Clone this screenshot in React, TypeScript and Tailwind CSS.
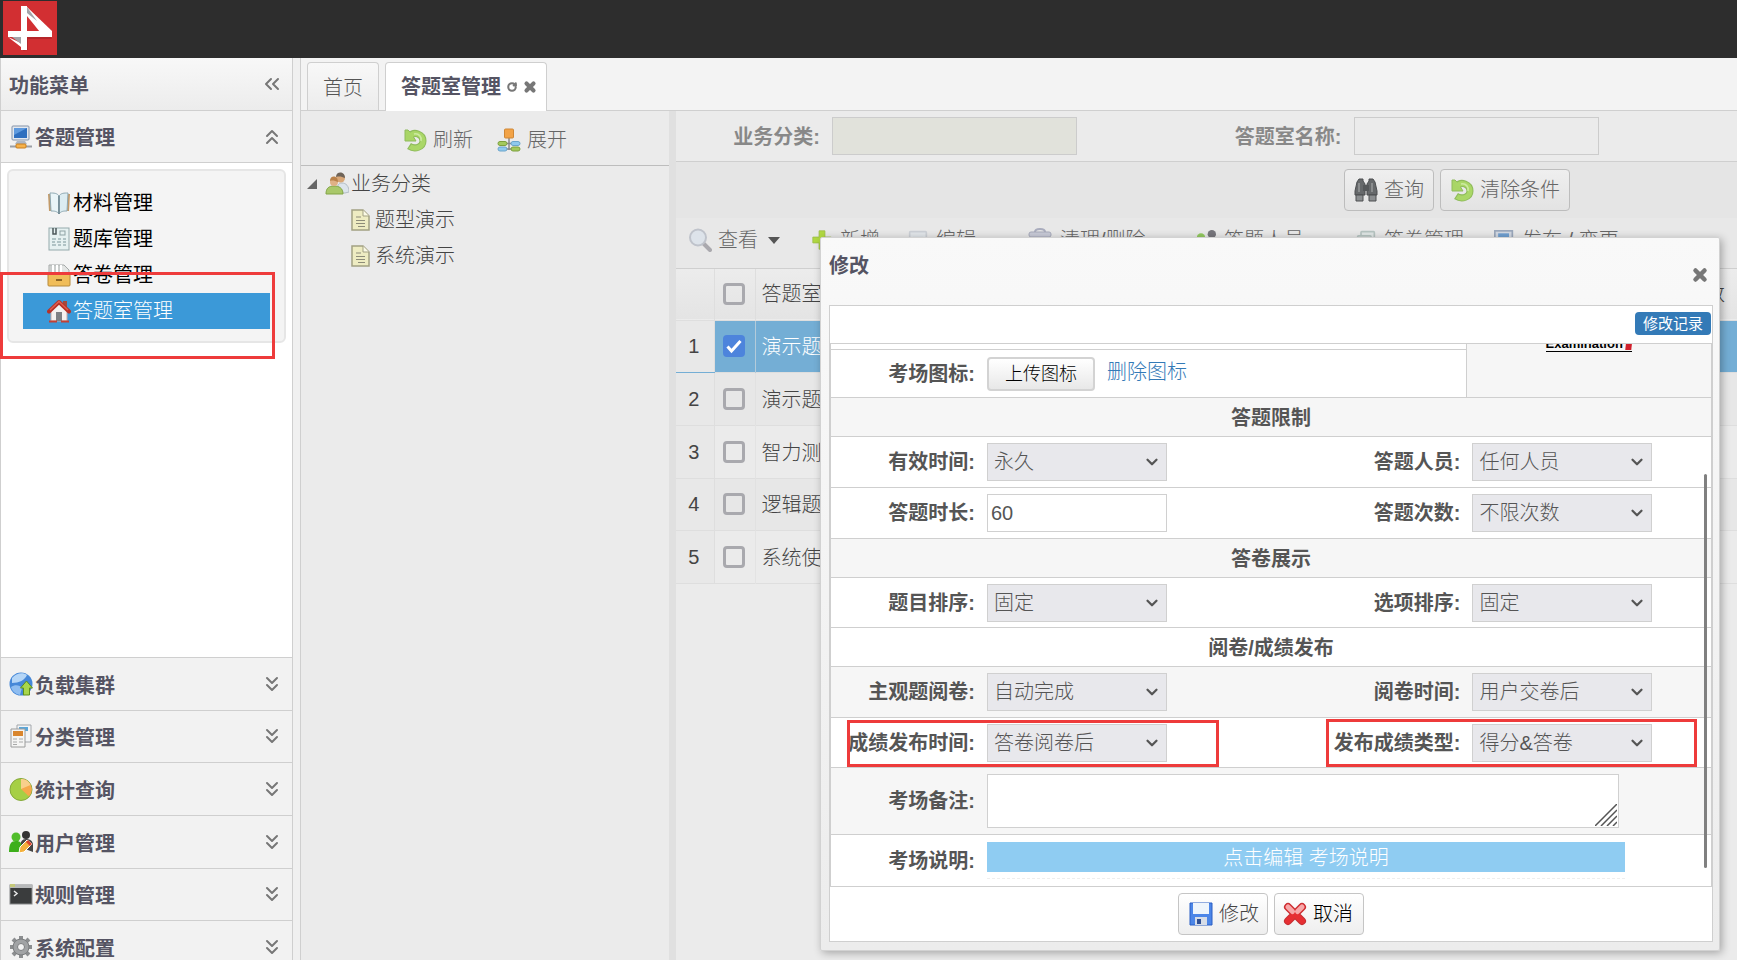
import { useState, type ReactNode } from 'react';
import { ChevronsDown, ChevronsLeft, ChevronsUp, ChevronDown, X, RotateCw } from 'lucide-react';

function Svg({ children, className = 'size-6' }: { children: ReactNode; className?: string }) {
    return <svg viewBox="0 0 24 24" fill="none" aria-hidden="true" className={`shrink-0 ${className}`}>{children}</svg>;
}

const LogoIcon = () => (
    <svg viewBox="0 0 54 54" aria-hidden="true" className="size-[54px]">
        <path fill="#d22f32" d="M0 0h54v54H0z" />
        <path fill="#b5262a" d="m20 50 5-1V38h24l-1-2H24z" />
        <path fill="#fff" d="m24 6 25 24v6h-8L24 15z" />
        <path fill="#a3a3a8" d="M24 6 34 20l-10-8z" />
        <path fill="#fff" d="m5 36 13 10v-4z" />
        <path fill="#a3a3a8" d="m9 36 9 7v-7z" />
        <path fill="#fff" d="M5 30h44v6H5z" />
        <path fill="#fff" d="M18 5h6v44h-6z" />
    </svg>
);

const ComputerIcon = () => (
    <Svg>
        <rect x="3" y="1" width="17" height="14" rx="1" fill="#e3e8ef" stroke="#8593a8" />
        <rect x="5" y="3" width="13" height="10" fill="#2f6fbf" />
        <path d="M5 3h13l-13 7z" fill="#5f9ade" />
        <path d="M8 16h8l2 3H6z" fill="#aeb7c4" />
        <path d="M1 21.500h22" stroke="#9b9fa5" strokeWidth="2" />
        <rect x="7" y="19" width="10" height="4" rx="1" fill="#f6b24b" stroke="#c97f1e" />
    </Svg>
);

const BookIcon = () => (
    <Svg>
        <path d="M1 3h5v17H2z" fill="#c39a68" />
        <path d="M18 3h5l-1 17h-4z" fill="#c39a68" />
        <path d="M3 2c4 0 7 0 9 3v18c-2-3-5-3-8-3z" fill="#eaf5f8" stroke="#8fa9b3" />
        <path d="M21 2c-4 0-7 0-9 3v18c2-3 5-3 8-3z" fill="#dcecf1" stroke="#8fa9b3" />
        <path d="M12 5v18" stroke="#6d858f" strokeWidth="1.500" />
    </Svg>
);

const SheetIcon = () => (
    <Svg>
        <rect x="2" y="1" width="20" height="22" fill="#e6f1f1" stroke="#94a9ab" />
        <path d="M6 1v6h3V1" stroke="#4c5759" strokeWidth="1.500" />
        <rect x="13" y="4" width="5" height="4" stroke="#8fa3a5" />
        <path d="M5 12h4m2 0h3m2 0h3M5 15h3m2 0h4m2 0h3M5 18h4m2 0h3m2 0h3" stroke="#9fb4b6" strokeWidth="1.500" />
    </Svg>
);

const BoxIcon = () => (
    <Svg>
        <path d="M2 2h15l5 5v6H2z" fill="#e3e5e4" stroke="#a5a9a8" />
        <path d="M6 2v10M10 2v10M14 2v10" stroke="#fff" strokeWidth="2" />
        <path d="M8 2v10M12 2v10M4 2v10" stroke="#b2b6b5" />
        <rect x="1" y="11" width="22" height="12" rx="1" fill="#f0bd59" stroke="#b68a3c" />
        <path d="M9 17h6" stroke="#8d6625" strokeWidth="2" />
    </Svg>
);

const HomeIcon = () => (
    <Svg>
        <path d="M4 12 12 5l8 7v10H4z" fill="#f5f2f0" stroke="#c9a9a3" />
        <path d="M16 2h4v6h-4z" fill="#a5493c" />
        <path d="M2 12.500 12 3l10 9.500" stroke="#b73128" strokeWidth="4" strokeLinejoin="round" strokeLinecap="round" />
        <path d="m3 11 9-8.500L21 11" stroke="#e0604f" strokeWidth="1.500" />
        <rect x="9" y="13" width="6" height="9" fill="#7f8184" />
        <path d="M2 22.500h8M14 22.500h8" stroke="#c24034" strokeWidth="2" />
    </Svg>
);

const GlobeIcon = () => (
    <Svg>
        <circle cx="12" cy="12" r="11.500" fill="#4688d8" />
        <path d="M3 6c4-5 11-6 15-3-2 5-8 8-15 8z" fill="#b5d6f7" />
        <path d="M2 15c4-3 9-2 11 1l-2 7C6 22 3 19 2 15z" fill="#8fbdf0" />
        <path d="m17.500 9 6 7h-3v7h-6v-7h-3z" fill="#a8d64b" stroke="#5f8f1d" />
    </Svg>
);

const NewsIcon = () => (
    <Svg>
        <path d="M8 1h14v17H8z" fill="#f3f5f7" stroke="#a3a7ab" />
        <path d="M10 3h9v4h-9z" fill="#5ba6d8" />
        <path d="M2 5h14v18H2z" fill="#f5f5f4" stroke="#9b9c9c" />
        <path d="M4 7h10v5H4z" fill="#d9862e" />
        <path d="M4 15h4m2 0h4M4 18h4m2 0h4M4 20.500h4" stroke="#a9aaaa" />
    </Svg>
);

const PieIcon = () => (
    <Svg>
        <circle cx="12" cy="12.500" r="11" fill="#a6cf45" stroke="#84a83a" />
        <path d="M12 12V2a10.500 10.500 0 0 1 8 17.500z" fill="#f6a84b" />
        <path d="M12 12V2c4 0 8 2 9.500 6z" fill="#f9cf8c" />
    </Svg>
);

const UsersEditIcon = () => (
    <Svg>
        <circle cx="17" cy="5" r="4" fill="#333" />
        <path d="M11 17c0-5 2-8 6-8s7 2 7 6v7z" fill="#444" />
        <circle cx="7" cy="7" r="4.500" fill="#51bd2b" />
        <path d="M0 22c0-8 2-11 7-11s6 2 6 11z" fill="#3daf1b" />
        <path d="m10 23 1-6 7-7 5 4-8 8z" fill="#f4b13d" stroke="#fff" />
        <path d="m18 11 4 4" stroke="#d9442f" strokeWidth="3" />
    </Svg>
);

const ConsoleIcon = () => (
    <Svg>
        <rect x="1" y="3" width="22" height="19" fill="#3a3c3d" stroke="#86888a" />
        <path d="M1 3h22v3H1z" fill="#b7b9ba" />
        <path d="M1 2h5v3H1z" fill="#c5c97a" />
        <path d="m5 9 3 2.500L5 14" stroke="#e8e8e8" strokeWidth="1.500" />
    </Svg>
);

const GearIcon = () => (
    <Svg>
        <path d="M12 1v22M1 12h22M4 4l16 16M20 4 4 20" stroke="#8c8e90" strokeWidth="4" />
        <circle cx="12" cy="12" r="8" fill="#a1a3a5" stroke="#7b7d7f" />
        <circle cx="12" cy="12" r="3.500" fill="#f2f2f2" stroke="#7b7d7f" />
    </Svg>
);

const UndoIcon = () => (
    <Svg>
        <path d="M7 8C11 3 20 6 20 13c0 6-8 9-14 5" stroke="#8fbb5c" strokeWidth="7" />
        <path d="M2 2h3l3 3 5 8H2z" fill="#a9d566" stroke="#8fbb5c" strokeLinejoin="round" />
        <path d="M7 8C11 3 20 6 20 13c0 6-8 9-13 5.500" stroke="#aad767" strokeWidth="5" />
        <path d="M11 6c5-1 8 3 7 7" stroke="#cdeba1" strokeWidth="1.500" />
    </Svg>
);

const TreeIcon = () => (
    <Svg>
        <path d="M12 9v13M5 15.500h14M5 21h14" stroke="#86888a" strokeWidth="1.500" />
        <rect x="7.500" y="1" width="9" height="9" rx="1" fill="#f2a347" stroke="#cf8736" />
        <rect x="1" y="13.500" width="9" height="4" rx="2" fill="#a3c95d" stroke="#7da03e" />
        <rect x="14" y="13.500" width="9" height="4" rx="2" fill="#8fc9ee" stroke="#6ba5cb" />
        <rect x="1" y="19" width="9" height="4" rx="2" fill="#8fc9ee" stroke="#6ba5cb" />
        <rect x="14" y="19" width="9" height="4" rx="2" fill="#a3c95d" stroke="#7da03e" />
    </Svg>
);

const PeopleIcon = () => (
    <Svg>
        <path d="M12 21c0-7 1-10 5-10s7 3 7 9l-4 1z" fill="#dce4ec" stroke="#b3bcc5" />
        <circle cx="15.500" cy="6" r="4.500" fill="#d9a777" />
        <path d="M11 5c0-6 9-6 9 1-3-1-5-2-9-1z" fill="#6f6458" />
        <path d="M1 22c0-6 3-8 8-8s9 2 9 8z" fill="#a9c86a" stroke="#83a547" />
        <circle cx="9" cy="10" r="4" fill="#e0b186" />
        <path d="M5 9c0-6 8-6 8 1-3-1-5-2-8-1z" fill="#b98149" />
    </Svg>
);

const PageIcon = () => (
    <svg viewBox="0 0 20 22" fill="none" aria-hidden="true" className="h-[22px] w-5 shrink-0">
        <path d="M1 1h11l6 6v14H1z" fill="#eeecc2" stroke="#a3a183" strokeWidth="1.500" />
        <path d="M12 1v6h6" fill="#fbfae6" stroke="#a3a183" />
        <path d="M5 8h5M5 11.500h9M5 14.500h9M7 17.500h7" stroke="#8d8c78" />
    </svg>
);

const BinocularsIcon = () => (
    <Svg>
        <path d="M5 1h4v2l2 3v11H1v-4L3 4z" fill="#66696b" stroke="#4c4f51" />
        <path d="M15 1h4l2 3 2 9v4H13V6l2-3z" fill="#66696b" stroke="#4c4f51" />
        <path d="M9 7h6v6H9z" fill="#55585a" />
        <path d="M2 17h7v6H2zM15 17h7v6h-7z" fill="#8b8e90" stroke="#4c4f51" />
        <path d="M5 5v9M18 5v9" stroke="#96999b" strokeWidth="1.500" />
    </Svg>
);

const SearchIcon = () => (
    <Svg>
        <path d="m15 15 7 7" stroke="#aaa9ae" strokeWidth="4" strokeLinecap="round" />
        <circle cx="10" cy="9.500" r="8" fill="#dde3ea" stroke="#bfc3cb" strokeWidth="2" />
    </Svg>
);

const PlusIcon = () => (
    <Svg className="size-5"><path d="M8.500 1h7v7.500H23v7h-7.500V23h-7v-7.500H1v-7h7.500z" fill="#b1d942" stroke="#9cbd48" /></Svg>
);

const EditIcon = () => (
    <Svg className="size-5">
        <rect x="2" y="2" width="20" height="20" rx="1" fill="#e2e6ea" stroke="#ccd0d6" strokeWidth="2" />
        <path d="M6 9h12" stroke="#c6c9d0" strokeWidth="1.500" />
    </Svg>
);

const TrashIcon = () => (
    <Svg className="size-6">
        <path d="M7 4c0-4 10-4 10 0" stroke="#a9acbd" strokeWidth="2" />
        <rect x="1" y="4" width="22" height="5" rx="2" fill="#c8cad7" stroke="#a6a9ba" />
        <path d="M4 9h16v14H4z" fill="#d8dae0" />
    </Svg>
);

const PairIcon = () => (
    <Svg className="size-5">
        <circle cx="19" cy="5" r="5" fill="#77767c" />
        <circle cx="6" cy="9" r="5" fill="#92c95f" />
        <path d="M1 22c0-9 11-9 11 0z" fill="#92c95f" />
    </Svg>
);

const CopyIcon = () => (
    <Svg className="size-5">
        <rect x="6" y="2" width="16" height="14" rx="1" fill="#e0e6e5" stroke="#b6c4c1" strokeWidth="2" />
        <rect x="2" y="7" width="16" height="14" rx="1" fill="#e9edec" stroke="#b6c4c1" strokeWidth="2" />
    </Svg>
);

const MonitorIcon = () => (
    <Svg className="size-5">
        <rect x="1" y="1" width="21" height="19" fill="#d2d8e2" stroke="#9aa7bb" strokeWidth="2" />
        <rect x="5" y="4" width="13" height="13" fill="#6f9fd0" />
    </Svg>
);

const SaveIcon = () => (
    <Svg>
        <path d="M1 1h22v22H1z" fill="#4c86e8" stroke="#2b5fc4" />
        <path d="M4 1h16v11H4z" fill="#eef5fc" />
        <path d="M6 15h12v8H6z" fill="#d6dde8" />
        <path d="M8 17h4v5H8z" fill="#2f4f94" />
    </Svg>
);

const CancelIcon = () => (
    <Svg>
        <path d="m5 5 14 14M19 5 5 19" stroke="#c53034" strokeWidth="8" strokeLinecap="round" />
        <path d="m5 5 14 14M19 5 5 19" stroke="#e62f33" strokeWidth="6" strokeLinecap="round" />
        <path d="m5 5 4.500 4.500M19 5l-4.500 4.500" stroke="#f6a9aa" strokeWidth="5" strokeLinecap="round" />
    </Svg>
);

const menuItems = [
    { label: '材料管理', icon: <BookIcon /> },
    { label: '题库管理', icon: <SheetIcon /> },
    { label: '答卷管理', icon: <BoxIcon /> },
    { label: '答题室管理', icon: <HomeIcon /> },
];

const sections = [
    { label: '负载集群', icon: <GlobeIcon /> },
    { label: '分类管理', icon: <NewsIcon /> },
    { label: '统计查询', icon: <PieIcon /> },
    { label: '用户管理', icon: <UsersEditIcon /> },
    { label: '规则管理', icon: <ConsoleIcon /> },
    { label: '系统配置', icon: <GearIcon /> },
];

const tools = [
    { label: '新增', icon: <PlusIcon />, caret: false, width: 'w-24' },
    { label: '编辑', icon: <EditIcon />, caret: true, width: 'w-30' },
    { label: '清理/删除', icon: <TrashIcon />, caret: true, width: 'w-42' },
    { label: '答题人员', icon: <PairIcon />, caret: true, width: 'w-40' },
    { label: '答卷管理', icon: <CopyIcon />, caret: false, width: 'w-[138px]' },
    { label: '发布 / 变更', icon: <MonitorIcon />, caret: true, width: 'w-44' },
];

const rows = ['演示题型', '演示题库', '智力测试', '逻辑题库', '系统使用'];

function Sidebar({ active, onSelect }: { active: string; onSelect: (label: string) => void }) {
    return (
        <aside className="relative flex w-[293px] shrink-0 flex-col border-x border-[#cfcfcf] bg-white">
            <div className="flex h-[53px] shrink-0 items-center justify-between border-b border-[#cfcfcf] bg-linear-to-b from-[#f8f8f8] to-[#ececec] pr-2 pl-2">
                <h2 className="pt-1 text-xl font-bold text-[#555463]">功能菜单</h2>
                <button type="button" aria-label="收起菜单"><ChevronsLeft className="size-6 text-[#777]" /></button>
            </div>
            <button type="button" className="flex h-13 shrink-0 items-center border-b border-[#cfcfcf] bg-[#f2f2f2] pr-2 pl-2">
                <ComputerIcon />
                <span className="ml-0.5 flex-1 pt-0.5 text-left text-xl font-bold text-[#555463]">答题管理</span>
                <ChevronsUp className="size-6 text-[#777]" />
            </button>
            <nav className="mx-1.5 mt-1.5 rounded-md border-2 border-[#e6e6e6] bg-[#f4f4f4] px-3.5 pt-3.5 pb-3">
                {menuItems.map((m) => (
                    <button key={m.label} type="button" onClick={() => onSelect(m.label)} className={`flex h-9 w-full items-center pl-6 text-xl ${m.label === active ? 'bg-[#3b99d8] font-light text-white' : 'text-black'}`}>
                        {m.icon}
                        <span className="ml-0.5">{m.label}</span>
                    </button>
                ))}
            </nav>
            <div className="flex-1" />
            <div className="h-[303px] shrink-0 overflow-hidden">
                <div className="grid h-[316px] grid-rows-6">
                    {sections.map((s) => (
                        <button key={s.label} type="button" className="flex items-center border-t border-[#cfcfcf] bg-[#f2f2f2] pr-2 pl-2">
                            {s.icon}
                            <span className="ml-0.5 flex-1 pt-1 text-left text-xl font-bold text-[#555463]">{s.label}</span>
                            <ChevronsDown className="size-6 text-[#777]" />
                        </button>
                    ))}
                </div>
            </div>
            <div className="pointer-events-none absolute top-[214px] -left-px h-[87px] w-[275px] border-3 border-[#ee3b3b]" />
        </aside>
    );
}

function TreePanel() {
    return (
        <section className="w-[368px] shrink-0">
            <div className="flex h-[55px] items-center justify-center gap-6 border-b border-[#bdbdbd] pt-1 text-xl font-light text-[#666]">
                <button type="button" className="flex items-center gap-1.5"><UndoIcon />刷新</button>
                <button type="button" className="flex items-center gap-1.5"><TreeIcon />展开</button>
            </div>
            <ul className="text-xl font-light text-[#444]">
                <li className="flex h-9 items-center pl-1.5">
                    <svg viewBox="0 0 10 10" aria-hidden="true" className="mr-2 size-2.5"><path d="M10 0v10H0z" fill="#666" /></svg>
                    <PeopleIcon /><span className="ml-0.5">业务分类</span>
                </li>
                <li className="flex h-9 items-center gap-1 pl-[50px]"><PageIcon />题型演示</li>
                <li className="flex h-9 items-center gap-1 pl-[50px]"><PageIcon />系统演示</li>
            </ul>
        </section>
    );
}

const tickBox = 'block size-[22px] appearance-none rounded-sm border-3 border-[#a9a9ae] checked:border-[#4d84dc] checked:bg-[#4d84dc]';
const searchButton = 'flex h-[42px] items-center gap-1.5 rounded-sm border border-[#bdbdbd] bg-linear-to-b from-[#efefef] to-[#e3e3e3] px-[9px]';

function RoomList() {
    const [checked, setChecked] = useState<Record<number, boolean>>({ 0: true });

    return (
        <section className="min-w-0 flex-1 border-l-7 border-[#e0e0e0]">
            <form>
                <div className="grid h-[51px] grid-cols-[156px_1fr_138px_1fr] items-center border-b border-[#cfcfcf] text-xl font-bold text-[#888]">
                    <label htmlFor="category" className="pt-0.5 pr-3 text-right">业务分类:</label>
                    <input id="category" readOnly className="h-[38px] w-[245px] border border-[#cccccc] bg-[#e1e2db]" />
                    <label htmlFor="roomName" className="pt-0.5 pr-3 text-right">答题室名称:</label>
                    <input id="roomName" className="h-[38px] w-[245px] border border-[#cccccc]" />
                </div>
                <div className="flex h-14 items-center justify-end gap-1.5 bg-[#e5e5e5] pr-[167px] text-xl font-light text-[#666]">
                    <button type="button" className={searchButton}><BinocularsIcon />查询</button>
                    <button type="reset" className={searchButton}><UndoIcon />清除条件</button>
                </div>
            </form>
            <div className="flex h-[51px] items-center border-b border-[#cfcfcf] bg-[#e8e8e8] pb-1.5 pl-3 text-xl font-light text-[#666]">
                <button type="button" className="flex w-[124px] shrink-0 items-center gap-1.5 whitespace-nowrap"><SearchIcon />查看<Caret /></button>
                {tools.map((t) => (
                    <button key={t.label} type="button" className={`flex shrink-0 items-center gap-2 whitespace-nowrap ${t.width}`}>
                        {t.icon}{t.label}{t.caret && <Caret />}
                    </button>
                ))}
            </div>
            <table className="h-[315px] w-full table-fixed text-xl font-light text-[#444]">
                <colgroup>
                    <col className="w-[38px]" />
                    <col className="w-[41px]" />
                    <col />
                    <col className="w-40" />
                </colgroup>
                <thead>
                    <tr className="h-[51px] border-b border-[#dedede] bg-linear-to-b from-[#ececec] to-[#e4e4e4]">
                        <th className="border-r border-[#dedede]" />
                        <th className="border-r border-[#dedede] pl-2"><input type="checkbox" aria-label="全选" className={tickBox} /></th>
                        <th className="pl-1.5 text-left font-light">答题室名称</th>
                        <th className="pr-3 text-right font-light">答题次数</th>
                    </tr>
                </thead>
                <tbody>
                    {rows.map((name, i) => (
                        <tr key={name} className={`border-b border-[#dedede] ${checked[i] ? 'bg-[#74aed5] text-white' : i % 2 ? 'bg-[#e7e7e7]' : 'bg-[#ebebeb]'}`}>
                            <td className={`border-r border-[#dedede] bg-[#e8e8e8] pr-0.5 text-center font-normal text-[#444] ${checked[i] ? 'border-b border-b-[#74aed5]' : ''}`}>{i + 1}</td>
                            <td className="border-r border-[#dedede]/60 pl-2">
                                <span className="relative block size-[22px]">
                                    <input type="checkbox" aria-label={name} checked={!!checked[i]} onChange={(e) => setChecked({ ...checked, [i]: e.target.checked })} className={tickBox} />
                                    {checked[i] && <svg viewBox="0 0 22 22" fill="none" aria-hidden="true" className="pointer-events-none absolute inset-0"><path d="m4.500 11.500 4 4.500L17.500 6" stroke="#fff" strokeWidth="3" /></svg>}
                                </span>
                            </td>
                            <td className="pt-0.5 pl-1.5">{name}</td>
                            <td />
                        </tr>
                    ))}
                </tbody>
            </table>
        </section>
    );
}

function Caret() {
    return <svg viewBox="0 0 12 7" aria-hidden="true" className="ml-1 h-[7px] w-3"><path d="M0 0h12L6 7z" fill="#555" /></svg>;
}

function SelectField({ id, label, value }: { id: string; label: string; value: string }) {
    return (
        <>
            <label htmlFor={id} className="pr-3 text-right font-bold whitespace-nowrap">{label}:</label>
            <div className="relative w-[180px]">
                <select id={id} defaultValue={value} className="h-[38px] w-full appearance-none border border-[#d0d0d0] bg-[#e8e8ec] pl-1.5 font-light text-[#555]">
                    <option>{value}</option>
                </select>
                <ChevronDown strokeWidth={3} className="pointer-events-none absolute top-2.5 right-1.5 size-[18px] text-[#555]" />
            </div>
        </>
    );
}

const formRow = 'grid grid-cols-[156px_29fr_156px_21fr] items-center border-b border-[#cfcfcf]';
const headRow = 'border-b border-[#cfcfcf] text-center text-xl font-bold';
const dialogButton = 'flex h-[42px] w-[90px] items-center rounded-sm border border-[#c5c5c5] bg-linear-to-b from-white to-[#eeeeee] text-xl font-light';

function EditDialog({ onClose }: { onClose: () => void }) {
    return (
        <div role="dialog" aria-label="修改" className="absolute top-[237px] right-[17px] w-[900px] rounded-xs border border-[#d2d2d2] bg-linear-to-b from-[#f9f9f9] via-[#f3f3f3] to-[#ececec] pr-1.5 pb-2 pl-2 shadow-[2px_2px_8px_rgba(0,0,0,0.3)]">
            <div className="flex h-[67px] items-start justify-between pr-1">
                <h2 className="pt-3.5 text-xl leading-7 font-bold text-[#555463]">修改</h2>
                <button type="button" aria-label="关闭" onClick={onClose} className="pt-7"><X strokeWidth={6} className="size-[18px] text-[#777]" /></button>
            </div>
            <div className="border border-[#cfcfcf] bg-white">
                <div className="flex h-[37px] items-center justify-end px-px pb-0.5">
                    <button type="button" className="h-[23px] rounded-sm bg-[#337ab7] px-2 text-[15px] leading-4 text-white">修改记录</button>
                </div>
                <form className="relative border border-[#cfcfcf] text-xl text-[#555]">
                    <div className="flex border-b border-[#cfcfcf]">
                        <div className="flex-1 pt-[5px]">
                            <div className="flex h-12 items-center border-t border-[#cfcfcf]">
                                <span className="w-[156px] pr-3 text-right font-bold">考场图标:</span>
                                <button type="button" className="h-[34px] w-[108px] rounded-sm border-2 border-[#d3d3d3] bg-linear-to-b from-white to-[#e8e8e8] text-lg font-light text-black">上传图标</button>
                                <a href="#icon" className="ml-3 pb-1 font-light text-[#337ab7]">删除图标</a>
                            </div>
                        </div>
                        <div className="flex w-[245px] justify-center overflow-hidden border-l border-[#cfcfcf] bg-[#f6f6f6]">
                            <div className="-mt-2 h-4 border-b border-black text-[13px] leading-4 font-bold text-black">
                                Examination <span className="inline-block h-3.5 w-1.5 -skew-x-6 bg-[#d01f2b] align-top" />
                            </div>
                        </div>
                    </div>
                    <h3 className={`h-[39px] bg-[#f6f6f6] leading-10 ${headRow}`}>答题限制</h3>
                    <div className={`h-[51px] ${formRow}`}>
                        <SelectField id="validTime" label="有效时间" value="永久" />
                        <SelectField id="people" label="答题人员" value="任何人员" />
                    </div>
                    <div className={`h-[51px] ${formRow}`}>
                        <label htmlFor="duration" className="pr-3 text-right font-bold">答题时长:</label>
                        <input id="duration" defaultValue="60" className="h-[38px] w-[180px] border border-[#d0d0d0] bg-white pl-[3px]" />
                        <SelectField id="times" label="答题次数" value="不限次数" />
                    </div>
                    <h3 className={`h-[39px] bg-[#f6f6f6] leading-10 ${headRow}`}>答卷展示</h3>
                    <div className={`h-[50px] ${formRow}`}>
                        <SelectField id="subjectSort" label="题目排序" value="固定" />
                        <SelectField id="optionSort" label="选项排序" value="固定" />
                    </div>
                    <h3 className={`h-[39px] leading-10 ${headRow}`}>阅卷/成绩发布</h3>
                    <div className={`h-[51px] bg-[#f6f6f6] ${formRow}`}>
                        <SelectField id="marking" label="主观题阅卷" value="自动完成" />
                        <SelectField id="markTime" label="阅卷时间" value="用户交卷后" />
                    </div>
                    <div className={`relative h-[50px] ${formRow}`}>
                        <SelectField id="publishTime" label="成绩发布时间" value="答卷阅卷后" />
                        <SelectField id="publishType" label="发布成绩类型" value="得分&答卷" />
                        <div className="pointer-events-none absolute top-0.5 left-4 h-[47px] w-[372px] border-3 border-[#ee3b3b]" />
                        <div className="pointer-events-none absolute top-px right-3.5 h-12 w-[371px] border-3 border-[#ee3b3b]" />
                    </div>
                    <div className="flex h-[67px] items-center border-b border-[#cfcfcf] bg-[#f6f6f6]">
                        <label htmlFor="remark" className="w-[156px] pr-3 text-right font-bold">考场备注:</label>
                        <div className="relative mr-[92px] flex-1">
                            <textarea id="remark" className="block h-[54px] w-full resize-none border border-[#d0d0d0] bg-white" />
                            <svg viewBox="0 0 22 22" aria-hidden="true" className="pointer-events-none absolute right-0.5 bottom-0.5 size-[22px]"><path d="M0 22 22 0M6 22 22 6M12 22l10-10M18 22l4-4" stroke="#555" strokeWidth="1.500" /></svg>
                        </div>
                    </div>
                    <div className="flex h-[51px] items-center">
                        <span className="w-[156px] pr-3 text-right font-bold">考场说明:</span>
                        <div className="mr-[86px] flex-1 border-b border-dashed border-[#eeeeee] pb-1.5">
                            <button type="button" className="block h-[30px] w-full bg-[#8fccf2] leading-8 font-light text-white">点击编辑 考场说明</button>
                        </div>
                    </div>
                    <div className="absolute right-1 bottom-[18px] h-[394px] w-[3px] rounded-full bg-[#808080]" />
                </form>
                <div className="flex h-[54px] items-center justify-center gap-1.5">
                    <button type="button" className={`${dialogButton} gap-1.5 pl-2.5 text-[#444]`}><SaveIcon />修改</button>
                    <button type="button" onClick={onClose} className={`${dialogButton} gap-1.5 pl-2 text-black`}><CancelIcon />取消</button>
                </div>
            </div>
        </div>
    );
}

export default function App() {
    const [active, setActive] = useState('答题室管理');
    const [open, setOpen] = useState(true);

    return (
        <div className="relative flex h-screen flex-col overflow-hidden bg-[#f0f0f0] font-['Liberation_Sans','Noto_Sans_CJK_SC',sans-serif]">
            <header className="h-[58px] shrink-0 bg-[#2d2d2d] pt-px pl-[3px]"><LogoIcon /></header>
            <div className="flex min-h-0 flex-1">
                <Sidebar active={active} onSelect={setActive} />
                <main className="ml-[7px] flex min-w-0 flex-1 flex-col border-l border-[#cfcfcf]">
                    <div className="flex h-[53px] shrink-0 items-end gap-1.5 border-b border-[#cfcfcf] bg-[#f3f3f3] pl-1.5 text-xl">
                        <button type="button" className="h-12 w-[72px] rounded-t-sm border border-b-0 border-[#cfcfcf] bg-linear-to-b from-[#f8f8f8] to-[#ececec] pt-0.5 font-light text-[#555]">首页</button>
                        <div className="-mb-px flex h-[49px] w-[162px] items-center gap-1.5 rounded-t-sm border border-b-0 border-[#cfcfcf] bg-white pl-[15px] text-[#777]">
                            <button type="button" className="font-bold text-[#555463]">答题室管理</button>
                            <button type="button" aria-label="刷新标签"><RotateCw strokeWidth={5} className="size-2.5" /></button>
                            <button type="button" aria-label="关闭标签"><X strokeWidth={7} className="size-3.5" /></button>
                        </div>
                    </div>
                    <div className="flex min-h-0 flex-1 bg-[#ebebeb]">
                        <TreePanel />
                        <RoomList />
                    </div>
                </main>
            </div>
            {open && <EditDialog onClose={() => setOpen(false)} />}
        </div>
    );
}
